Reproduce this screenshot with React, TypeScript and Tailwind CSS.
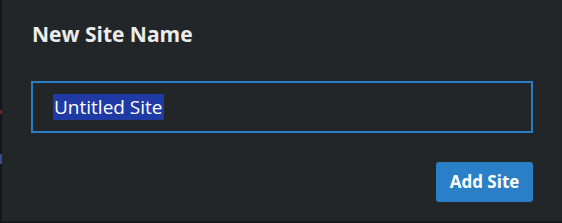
export default function App() {
  return (
    <div className="flex h-[223px] w-[562px] bg-[#17191b]" style={{ fontFamily: '"Open Sans", "Noto Sans", sans-serif' }}>
      {/* left edge strip */}
      <div className="relative w-[2px] shrink-0 bg-[#141617]">
        <div className="absolute left-0 top-[110px] h-[4px] w-[2px] bg-[#6a1f24]" />
        <div className="absolute left-0 top-[154px] h-[10px] w-[2px] bg-[#3a4a8a]" />
      </div>
      <div className="flex h-[221px] flex-1 flex-col bg-[#232629] pl-[29px] pr-[29px]">
        <h1 className="mt-[20px] pl-[1px] text-[21px] font-bold leading-[28px] text-[#ececec]">New Site Name</h1>
        <div className="mt-[33px] flex h-[52px] items-center border-2 border-[#2a7cc4] pl-[20px]">
          <span className="bg-[#1f3aa5] px-[1px] text-[19px] leading-[26px] text-white">Untitled Site</span>
        </div>
        <div className="mt-[29px] flex justify-end">
          <button className="h-[40px] w-[97px] rounded-[3px] bg-[#2b7fc7] text-[17px] font-bold text-white">
            Add Site
          </button>
        </div>
      </div>
    </div>
  );
}
